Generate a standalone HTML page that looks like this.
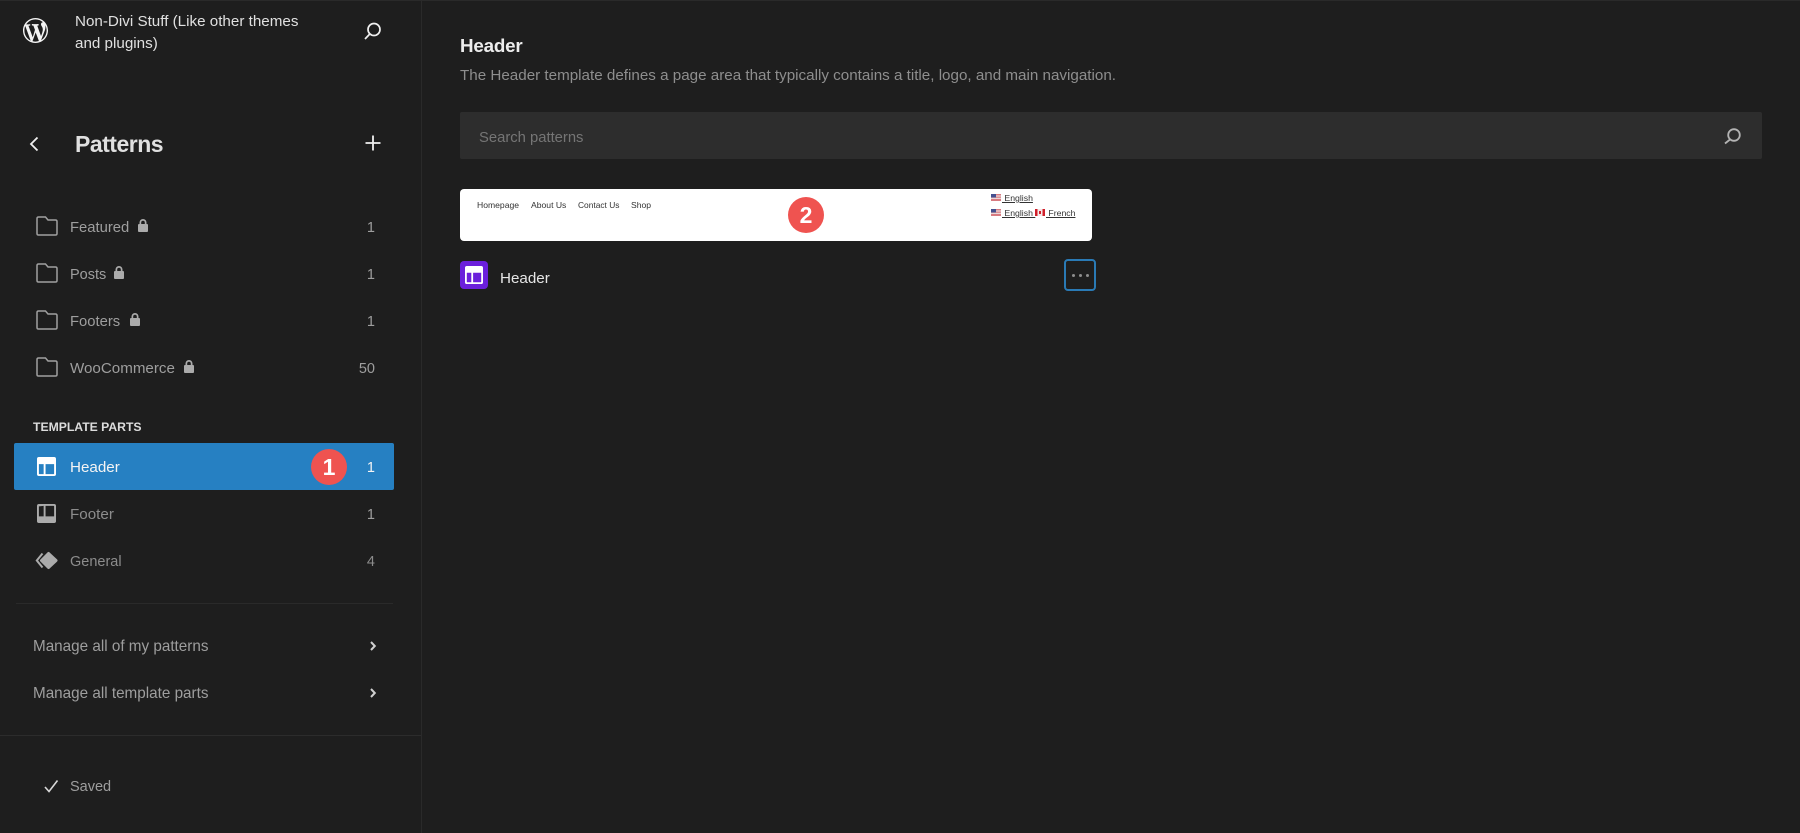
<!DOCTYPE html>
<html><head><meta charset="utf-8">
<style>
html,body{margin:0;padding:0;width:1800px;height:833px;overflow:hidden;background:#1e1e1e;}
body{position:relative;font-family:"Liberation Sans",sans-serif;color:#9e9e9e;}
.t{position:absolute;white-space:nowrap;line-height:20px;font-size:14.5px;}
.a{position:absolute;}
svg{position:absolute;overflow:visible;}
.c{text-align:right;width:40px;left:335px;}
</style></head><body>
<div class="a" style="left:421px;top:0;width:1px;height:833px;background:#2a2a2a"></div>
<div class="a" style="left:0;top:0;width:1800px;height:1px;background:#2a2a2a"></div>
<div class="a" style="left:0;top:735px;width:421px;height:1px;background:#2c2c2c"></div>
<div class="a" style="left:16px;top:603px;width:377px;height:1px;background:#2a2a2a"></div>

<!-- WP logo -->
<svg style="left:23px;top:18px" width="25" height="25" viewBox="0 0 20 20"><path fill="#f4f4f4" d="M20 10c0-5.510-4.490-10-10-10C4.480 0 0 4.490 0 10c0 5.520 4.480 10 10 10 5.510 0 10-4.480 10-10zM7.780 15.370L4.370 6.220c.550-.020 1.170-.080 1.170-.080.500-.060.440-1.130-.060-1.110 0 0-1.450.110-2.370.110-.180 0-.370 0-.580-.010C4.120 2.690 6.890 1.050 10 1.050c2.320 0 4.430.870 6.030 2.340-.680-.110-1.650.390-1.650 1.580 0 .740.450 1.360.900 2.100.350.610.550 1.360.550 2.460 0 1.490-1.400 5-1.400 5l-3.030-8.370c.540-.020.820-.170.820-.170.500-.050.440-1.250-.060-1.220 0 0-1.440.120-2.380.120-.870 0-2.330-.120-2.330-.120-.500-.030-.560 1.200-.060 1.220l.920.080 1.260 3.410zM17.410 10c.240-.640.740-1.870.430-4.250.700 1.290 1.050 2.710 1.050 4.250 0 3.290-1.730 6.240-4.400 7.780.970-2.590 1.940-5.200 2.920-7.780zM6.100 18.090C3.120 16.650 1.110 13.530 1.110 10c0-1.300.230-2.480.72-3.590C3.250 10.300 4.670 14.200 6.100 18.090zm4.030-6.630l2.580 6.980c-.860.290-1.740.450-2.710.450-.820 0-1.620-.120-2.370-.350.840-2.380 1.680-4.710 2.500-7.080z"/></svg>
<div class="t" style="left:75px;top:12px;color:#e0e0e0;font-size:15.2px;">Non-Divi Stuff (Like other themes</div>
<div class="t" style="left:75px;top:34px;color:#e0e0e0;font-size:15.2px;">and plugins)</div>
<!-- search -->
<svg style="left:363px;top:21px" width="20" height="20" viewBox="0 0 20 20" fill="none" stroke="#f0f0f0" stroke-width="1.7"><circle cx="11" cy="8.500" r="6"/><path d="M6.800 13 2 18"/></svg>

<!-- back -->
<svg style="left:27px;top:134px" width="14" height="20" viewBox="0 0 14 20" fill="none" stroke="#f0f0f0" stroke-width="1.8"><path d="M10.500 3.500 4 10 10.500 16.500"/></svg>
<div class="t" style="left:75px;top:131px;line-height:26px;font-size:23px;font-weight:bold;color:#e0e0e0;letter-spacing:-.5px;">Patterns</div>
<svg style="left:364px;top:134px" width="18" height="18" viewBox="0 0 18 18" fill="none" stroke="#f0f0f0" stroke-width="1.8"><path d="M9 1.500v15M1.500 9h15"/></svg>

<!-- folders -->
<svg style="left:36px;top:216px" width="22" height="20" viewBox="0 0 22 20" fill="none" stroke="#a0a0a0" stroke-width="1.5"><path d="M1 2.500Q1 1 2.500 1h7l2.500 3h7.500Q21 4 21 5.500V17.500Q21 19 19.500 19H2.500Q1 19 1 17.500Z"/></svg>
<svg style="left:36px;top:263px" width="22" height="20" viewBox="0 0 22 20" fill="none" stroke="#a0a0a0" stroke-width="1.5"><path d="M1 2.500Q1 1 2.500 1h7l2.500 3h7.500Q21 4 21 5.500V17.500Q21 19 19.500 19H2.500Q1 19 1 17.500Z"/></svg>
<svg style="left:36px;top:310px" width="22" height="20" viewBox="0 0 22 20" fill="none" stroke="#a0a0a0" stroke-width="1.5"><path d="M1 2.500Q1 1 2.500 1h7l2.500 3h7.500Q21 4 21 5.500V17.500Q21 19 19.500 19H2.500Q1 19 1 17.500Z"/></svg>
<svg style="left:36px;top:357px" width="22" height="20" viewBox="0 0 22 20" fill="none" stroke="#a0a0a0" stroke-width="1.5"><path d="M1 2.500Q1 1 2.500 1h7l2.500 3h7.500Q21 4 21 5.500V17.500Q21 19 19.500 19H2.500Q1 19 1 17.500Z"/></svg>

<div class="t" style="left:70px;top:218px;font-size:14.8px;">Featured</div>
<div class="t" style="left:70px;top:265px;">Posts</div>
<div class="t" style="left:70px;top:312px;font-size:14.8px;">Footers</div>
<div class="t" style="left:70px;top:359px;font-size:15.15px;">WooCommerce</div>

<!-- locks -->
<svg style="left:138px;top:219px" width="10" height="13" viewBox="0 0 10 13"><path fill="#ababab" d="M0 6q0-1 1-1h.5V3.500a3.500 3.500 0 0 1 7 0V5H9q1 0 1 1v6q0 1-1 1H1q-1 0-1-1zM3.200 5h3.600V3.500a1.800 1.800 0 0 0-3.600 0z"/></svg>
<svg style="left:114px;top:266px" width="10" height="13" viewBox="0 0 10 13"><path fill="#ababab" d="M0 6q0-1 1-1h.5V3.500a3.500 3.500 0 0 1 7 0V5H9q1 0 1 1v6q0 1-1 1H1q-1 0-1-1zM3.200 5h3.600V3.500a1.800 1.800 0 0 0-3.600 0z"/></svg>
<svg style="left:130px;top:313px" width="10" height="13" viewBox="0 0 10 13"><path fill="#ababab" d="M0 6q0-1 1-1h.5V3.500a3.500 3.500 0 0 1 7 0V5H9q1 0 1 1v6q0 1-1 1H1q-1 0-1-1zM3.200 5h3.600V3.500a1.800 1.800 0 0 0-3.600 0z"/></svg>
<svg style="left:184px;top:360px" width="10" height="13" viewBox="0 0 10 13"><path fill="#ababab" d="M0 6q0-1 1-1h.5V3.500a3.500 3.500 0 0 1 7 0V5H9q1 0 1 1v6q0 1-1 1H1q-1 0-1-1zM3.200 5h3.600V3.500a1.800 1.800 0 0 0-3.600 0z"/></svg>

<div class="t c" style="top:218px;">1</div>
<div class="t c" style="top:265px;">1</div>
<div class="t c" style="top:312px;">1</div>
<div class="t c" style="top:359px;">50</div>

<div class="t" style="left:33px;top:417px;font-size:12.2px;font-weight:bold;color:#dcdcdc;">TEMPLATE PARTS</div>

<!-- active row -->
<div class="a" style="left:14px;top:443px;width:380px;height:47px;background:#2680c2;border-radius:2px"></div>
<svg style="left:37px;top:457px" width="19" height="19" viewBox="0 0 20 20"><path fill-rule="evenodd" fill="#fff" d="M2 0h16q2 0 2 2v16q0 2-2 2H2q-2 0-2-2V2Q0 0 2 0zM2 7.500v10q0 .5.500.5H7V7.500zM9 7.500V18h8.500q.5 0 .5-.5v-10z"/></svg>
<div class="t" style="left:70px;top:458px;color:#f4f4f4;font-size:15.2px;">Header</div>
<div class="a" style="left:311px;top:449px;width:36px;height:36px;border-radius:50%;background:#ef5350;color:#fff;font-weight:bold;font-size:23px;line-height:36px;text-align:center;">1</div>
<div class="t c" style="top:458px;color:#f4f4f4;">1</div>

<!-- footer row -->
<svg style="left:37px;top:504px" width="19" height="19" viewBox="0 0 20 20"><path fill-rule="evenodd" fill="#ababab" d="M2 0h16q2 0 2 2v16q0 2-2 2H2q-2 0-2-2V2Q0 0 2 0zM2 2.500V13h5V2zM9 2v11h9V2.500q0-.5-.5-.5z"/></svg>
<div class="t" style="left:70px;top:505px;color:#8c8c8c;font-size:15.2px;">Footer</div>
<div class="t c" style="top:505px;">1</div>

<!-- general row -->
<svg style="left:35px;top:550px" width="25" height="22" viewBox="0 0 25 22"><path fill="#ababab" stroke="#ababab" stroke-width="3" stroke-linejoin="round" d="M13.500 3.500 21 10.500 13.500 17.500 6.500 10.500z"/><path fill="none" stroke="#ababab" stroke-width="2" d="M7.500 3.500 1.800 10.500 7.500 17.500"/></svg>
<div class="t" style="left:70px;top:552px;color:#8c8c8c;">General</div>
<div class="t c" style="top:552px;color:#8c8c8c;">4</div>

<div class="t" style="left:33px;top:637px;font-size:15.25px;">Manage all of my patterns</div>
<div class="t" style="left:33px;top:684px;font-size:15.25px;">Manage all template parts</div>
<svg style="left:369px;top:640px" width="8" height="14" viewBox="0 0 8 14" fill="none" stroke="#d0d0d0" stroke-width="2"><path d="M2 2 5.800 6 2 10"/></svg>
<svg style="left:369px;top:687px" width="8" height="14" viewBox="0 0 8 14" fill="none" stroke="#d0d0d0" stroke-width="2"><path d="M2 2 5.800 6 2 10"/></svg>

<svg style="left:44px;top:779px" width="16" height="16" viewBox="0 0 16 16" fill="none" stroke="#d8d8d8" stroke-width="1.6"><path d="M1 8 5 12.500 13.500 1.500"/></svg>
<div class="t" style="left:70px;top:777px;">Saved</div>

<!-- main -->
<div class="t" style="left:460px;top:36px;font-size:18.8px;font-weight:bold;color:#ededed;letter-spacing:-.2px;">Header</div>
<div class="t" style="left:460px;top:66px;font-size:15.2px;color:#8e8e8e;">The Header template defines a page area that typically contains a title, logo, and main navigation.</div>
<div class="a" style="left:460px;top:112px;width:1302px;height:47px;background:#2d2d2d;border-radius:2px"></div>
<div class="t" style="left:479px;top:128px;color:#757575;font-size:14.8px;">Search patterns</div>
<svg style="left:1722px;top:125px" width="20" height="20" viewBox="0 0 20 20" fill="none" stroke="#b4b4b4" stroke-width="1.8"><circle cx="12" cy="10" r="5.800"/><path d="M8 14.500 3 18.500"/></svg>

<div class="a" style="left:460px;top:189px;width:632px;height:52px;background:#fff;border-radius:4px"></div>
<div class="t" style="left:477px;top:195px;font-size:8.600px;color:#333;">Homepage</div>
<div class="t" style="left:531px;top:195px;font-size:8.600px;color:#333;">About Us</div>
<div class="t" style="left:578px;top:195px;font-size:8.400px;color:#333;">Contact Us</div>
<div class="t" style="left:631px;top:195px;font-size:8.600px;color:#333;">Shop</div>

<div class="a" style="left:788px;top:197px;width:36px;height:36px;border-radius:50%;background:#ef5350;color:#fff;font-weight:bold;font-size:23px;line-height:36px;text-align:center;">2</div>

<svg style="left:991px;top:194px" width="10" height="7" viewBox="0 0 10 7"><rect width="10" height="7" fill="#d87a80"/><rect y="1.500" width="10" height="1" fill="#eee"/><rect y="3.800" width="10" height="1" fill="#eee"/><rect width="5" height="3.500" fill="#44508f"/></svg>
<div class="t" style="left:1002px;top:188px;font-size:8.700px;color:#333;text-decoration:underline;">&nbsp;English</div>
<svg style="left:991px;top:209px" width="10" height="7" viewBox="0 0 10 7"><rect width="10" height="7" fill="#d87a80"/><rect y="1.500" width="10" height="1" fill="#eee"/><rect y="3.800" width="10" height="1" fill="#eee"/><rect width="5" height="3.500" fill="#44508f"/></svg>
<div class="t" style="left:1002px;top:203px;font-size:8.700px;color:#333;text-decoration:underline;">&nbsp;English&nbsp;</div>
<svg style="left:1035px;top:209px" width="10" height="7" viewBox="0 0 10 7"><rect width="10" height="7" fill="#f4e8e8"/><rect width="2.500" height="7" fill="#d01f2a"/><rect x="7.500" width="2.500" height="7" fill="#d01f2a"/><rect x="4" y="2" width="2" height="3" fill="#d01f2a"/></svg>
<div class="t" style="left:1046px;top:203px;font-size:8.700px;color:#333;text-decoration:underline;">&nbsp;French</div>

<div class="a" style="left:460px;top:261px;width:28px;height:28px;background:#6b1fdb;border-radius:4px"></div>
<svg style="left:465px;top:266px" width="18" height="18" viewBox="0 0 20 20"><path fill-rule="evenodd" fill="#fff" d="M2 0h16q2 0 2 2v16q0 2-2 2H2q-2 0-2-2V2Q0 0 2 0zM2 7.500v10q0 .5.500.5H7V7.500zM9 7.500V18h8.500q.5 0 .5-.5v-10z"/></svg>
<div class="t" style="left:500px;top:269px;color:#e6e6e6;font-size:15.2px;">Header</div>
<div class="a" style="left:1064px;top:259px;width:28px;height:28px;border:2px solid #2a7ab5;border-radius:4px"></div>
<div class="a" style="left:1072px;top:274px;width:3px;height:3px;background:#8e8e8e;border-radius:50%"></div>
<div class="a" style="left:1079px;top:274px;width:3px;height:3px;background:#8e8e8e;border-radius:50%"></div>
<div class="a" style="left:1086px;top:274px;width:3px;height:3px;background:#8e8e8e;border-radius:50%"></div>
</body></html>
